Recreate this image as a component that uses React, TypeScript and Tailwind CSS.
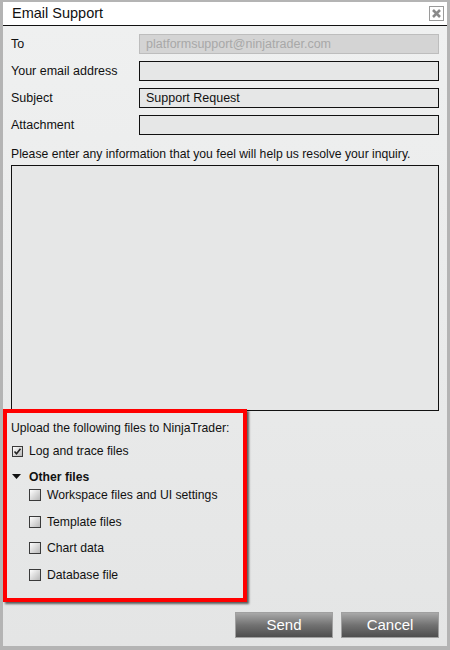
import React from "react";

const font = { fontFamily: '"Liberation Sans", Arial, sans-serif' };

function Box({ checked = false, size = 11 }: { checked?: boolean; size?: number }) {
  return (
    <div
      className={
        (size === 12 ? "w-[12px] h-[12px] " : "w-[11px] h-[11px] ") +
        "border border-[#3a3a3a] bg-gradient-to-br from-[#ffffff] to-[#b8b8b8] flex items-center justify-center shrink-0"
      }
    >
      {checked && (
        <svg width="9" height="9" viewBox="0 0 9 9">
          <path d="M1.5 4.5 L3.5 6.8 L7.5 1.8" stroke="#222" strokeWidth="1.6" fill="none" />
        </svg>
      )}
    </div>
  );
}

function Row({ label, value, disabled = false }: { label: string; value?: string; disabled?: boolean }) {
  return (
    <div className="flex items-center h-[20px]">
      <div className="w-[128px] text-[12.5px] text-[#111] pt-[1px]">{label}</div>
      <div
        className={
          disabled
            ? "flex-1 h-[20px] border border-[#bdbdbd] bg-[#d4d4d4] text-[#a8a8a8] text-[12.5px] flex items-center px-[6px]"
            : "flex-1 h-[20px] border border-[#111] bg-[#e6e7e7] text-[#111] text-[12.5px] flex items-center px-[6px]"
        }
      >
        {value}
      </div>
    </div>
  );
}

export default function App() {
  return (
    <div style={font} className="w-[450px] h-[650px] bg-[#b4b4b4] pl-[3px] pr-[3px] pt-[2px] pb-[4px]">
      <div className="w-full h-full flex flex-col">
        <div className="h-[24px] bg-white border-b border-[#111] flex items-center justify-between pl-[9px] pr-[3px]">
          <span className="text-[14.5px] text-[#111]">Email Support</span>
          <div className="w-[15px] h-[15px] border border-[#9a9a9a] flex items-center justify-center">
            <svg width="11" height="11" viewBox="0 0 11 11">
              <path d="M2 2 L9 9 M9 2 L2 9" stroke="#8a8a8a" strokeWidth="2.6" />
            </svg>
          </div>
        </div>
        <div className="flex-1 bg-gradient-to-b from-[#eff0f0] to-[#e4e5e5] flex flex-col px-[8px] pt-[8px]">
          <div className="flex flex-col gap-[7px]">
            <Row label="To" value="platformsupport@ninjatrader.com" disabled />
            <Row label="Your email address" />
            <Row label="Subject" value="Support Request" />
            <Row label="Attachment" />
          </div>
          <div className="text-[12.2px] text-[#111] mt-[10px] h-[19px] leading-[19px]">
            Please enter any information that you feel will help us resolve your inquiry.
          </div>
          <div className="mt-[1px] h-[246px] border border-[#111] bg-[#e6e7e7]"></div>
          <div className="-ml-[8px] -mt-[2px] w-[244px] h-[193px] border-4 border-[#ff0000] shadow-[2px_2px_2px_rgba(0,0,0,0.6)] pl-[4px] pt-[5px] text-[12.2px] text-[#111]">
            <div className="h-[20px] leading-[20px]">Upload the following files to NinjaTrader:</div>
            <div className="flex items-center mt-[6px] h-[14px] pl-[1px]">
              <Box checked />
              <span className="ml-[6px]">Log and trace files</span>
            </div>
            <div className="flex items-center mt-[12px] h-[14px] pl-[1px]">
              <svg width="9" height="6" viewBox="0 0 9 6">
                <path d="M0 0 L9 0 L4.5 5 Z" fill="#111" />
              </svg>
              <span className="ml-[8px] font-bold">Other files</span>
            </div>
            <div className="flex flex-col gap-[12.7px] mt-[4px] pl-[18px]">
              {["Workspace files and UI settings", "Template files", "Chart data", "Database file"].map((t) => (
                <div key={t} className="flex items-center h-[14px]">
                  <Box size={12} />
                  <span className="ml-[6px]">{t}</span>
                </div>
              ))}
            </div>
          </div>
          <div className="flex justify-end gap-[8px] mt-[10px]">
            {["Send", "Cancel"].map((t) => (
              <div
                key={t}
                className="w-[98px] h-[26px] border border-[#a0a0a0] bg-gradient-to-b from-[#a9a9a9] via-[#727272] to-[#4e4e4e] text-white text-[15px] flex items-center justify-center"
              >
                {t}
              </div>
            ))}
          </div>
        </div>
      </div>
    </div>
  );
}
